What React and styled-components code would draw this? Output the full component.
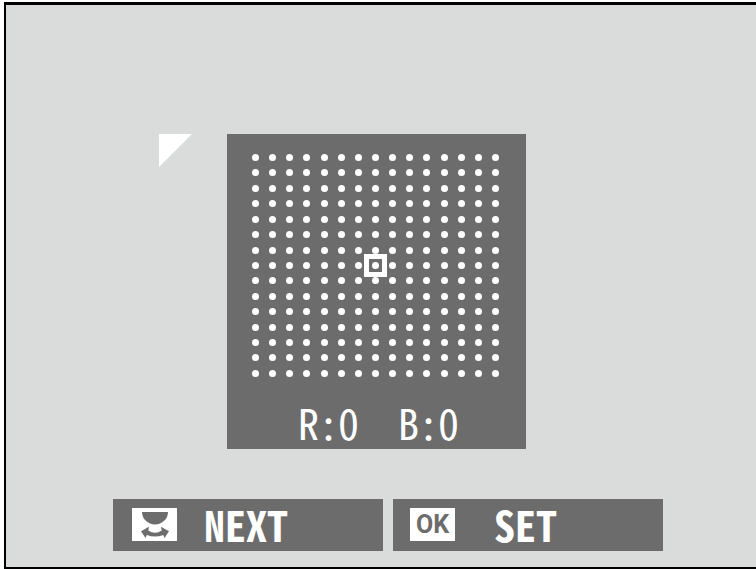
import React from "react";
import styled, { createGlobalStyle } from "styled-components";

const GlobalStyle = createGlobalStyle`
  *, *::before, *::after { box-sizing: border-box; }
  body { margin: 0; background: #fff; }
`;

const Screen = styled.main`
  display: flex;
  flex-direction: column;
  justify-content: space-between;
  min-height: calc(100vh - 2px);
  margin: 2px 0 0 4px;
  padding: 129px 93px 16px 107px;
  border: solid #000;
  border-width: 3px 0 2px 2px;
  background: #dadcdb;
  color: #fff;
  font-family: "Noto Sans Mono CJK JP", "Noto Sans CJK JP", sans-serif;
`;

const Stage = styled.section`
  display: flex;
  align-items: flex-start;
  gap: 35px;
  padding-left: 46px;
`;

const Corner = styled.svg`
  flex: none;
  width: 33px;
  height: 33px;
  fill: #fff;
`;

const ShiftPanel = styled.div`
  display: flex;
  flex-direction: column;
  width: 299px;
  padding: 20px 27px 4px 25px;
  background: #6c6c6c;
`;

const DotGrid = styled.div`
  display: grid;
  grid-template-columns: repeat(15, 7px);
  grid-auto-rows: 7px;
  justify-content: space-between;
  align-content: space-between;
  height: 223px;
`;

const Dot = styled.span`
  position: relative;
  border-radius: 50%;
  background: #fff;
`;

const Cursor = styled.span`
  position: absolute;
  inset: -8px;
  border: 5px solid #fff;
`;

const Readout = styled.div`
  display: flex;
  justify-content: center;
  gap: 40px;
  margin-top: 22px;
  padding-left: 6px;
  font-size: 42px;
  line-height: 46px;
`;

const Value = styled.output`
  display: grid;
  grid-template-columns: repeat(3, 20px);
  justify-items: center;
`;

const Actions = styled.footer`
  display: grid;
  grid-template-columns: 1fr 1fr;
  gap: 10px;
`;

const Action = styled.button`
  display: flex;
  align-items: center;
  gap: ${(p) => p.$gap}px;
  height: 52px;
  padding: 0 0 2px ${(p) => p.$inset}px;
  border: 0;
  background: #6c6c6c;
  color: #fff;
  font: bold 42px/50px "Noto Sans Mono CJK JP", "Noto Sans CJK JP", sans-serif;
`;

const Key = styled.span`
  display: flex;
  align-items: center;
  justify-content: center;
  width: 45px;
  height: 33px;
  background: #fff;
  color: #6c6c6c;
  font: bold 25px/33px Roboto, sans-serif;
`;

const DialIcon = () => (
  <svg width="45" height="33" viewBox="0 0 45 33" fill="#6c6c6c" aria-hidden="true">
    <path d="M10 4H36A13 12.5 0 0 1 10 4Z" />
    <path d="M9 23.3L17 18.7L16.3 22.4Q23 27 29.7 22.4L29 18.7L37 23.3L32.5 30L31.2 26.9Q23 30 14.8 26.9L13.5 30Z" />
  </svg>
);

const CENTER = 112;

const Readings = [
  { label: "R", value: 0 },
  { label: "B", value: 0 },
];

export default function App() {
  return (
    <>
      <GlobalStyle />
      <Screen>
        <Stage>
          <Corner viewBox="0 0 33 33" aria-hidden="true">
            <path d="M0 0H33L0 33Z" />
          </Corner>
          <ShiftPanel>
            <DotGrid>
              {Array.from({ length: 225 }, (_, i) => (
                <Dot key={i}>{i === CENTER && <Cursor />}</Dot>
              ))}
            </DotGrid>
            <Readout>
              {Readings.map(({ label, value }) => (
                <Value key={label}>
                  <span>{label}</span>
                  <span>:</span>
                  <span>{value}</span>
                </Value>
              ))}
            </Readout>
          </ShiftPanel>
        </Stage>
        <Actions>
          <Action type="button" $inset={19} $gap={27}>
            <Key><DialIcon /></Key>
            NEXT
          </Action>
          <Action type="button" $inset={17} $gap={39}>
            <Key>OK</Key>
            SET
          </Action>
        </Actions>
      </Screen>
    </>
  );
}
